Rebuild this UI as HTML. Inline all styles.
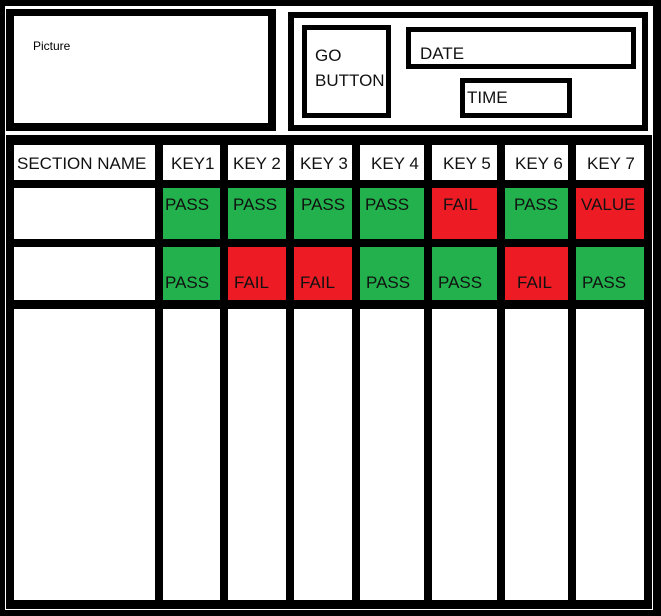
<!DOCTYPE html>
<html><head><style>
body{margin:0;width:661px;height:616px;background:#000;position:relative;overflow:hidden;font-family:"Liberation Sans",Arial,sans-serif}
div{position:absolute;box-sizing:border-box}
.w{background:#fff}
.b{border:5px solid #000;background:#fff}
.c{font-size:17px;color:#111;white-space:nowrap}
.g{background:#22b14c}
.r{background:#ed1c24}
</style></head><body>
<div style="left:5px;top:6px;width:648px;height:604px;border:1px solid #fff"></div>
<div class="w" style="left:6px;top:7px;width:646px;height:128px"></div>
<div class="b" style="left:6px;top:9px;width:270px;height:122px;border-width:7px 8px 8px 8px"></div>
<div style="left:33px;top:39px;font-size:12px">Picture</div>
<div class="b" style="left:288px;top:12px;width:360px;height:119px;border-width:6px"></div>
<div class="b" style="left:302px;top:25px;width:89px;height:93px"></div>
<div class="c" style="left:315px;top:43px;line-height:25px">GO<br>BUTTON</div>
<div class="b" style="left:406px;top:27px;width:230px;height:42px"></div>
<div class="c" style="left:420px;top:44px">DATE</div>
<div class="b" style="left:460px;top:78px;width:112px;height:40px"></div>
<div class="c" style="left:467px;top:88px">TIME</div>

<div class="w c" style="left:14px;top:145px;width:141px;height:35px;padding:9px 0 0 3px">SECTION NAME</div>
<div class="w c" style="left:163px;top:145px;width:57px;height:35px;padding:9px 0 0 8px">KEY1</div>
<div class="w c" style="left:228px;top:145px;width:58px;height:35px;padding:9px 0 0 5px">KEY 2</div>
<div class="w c" style="left:294px;top:145px;width:58px;height:35px;padding:9px 0 0 6px">KEY 3</div>
<div class="w c" style="left:360px;top:145px;width:64px;height:35px;padding:9px 0 0 11px">KEY 4</div>
<div class="w c" style="left:432px;top:145px;width:65px;height:35px;padding:9px 0 0 11px">KEY 5</div>
<div class="w c" style="left:505px;top:145px;width:63px;height:35px;padding:9px 0 0 10px">KEY 6</div>
<div class="w c" style="left:576px;top:145px;width:68px;height:35px;padding:9px 0 0 11px">KEY 7</div>

<div class="w" style="left:14px;top:188px;width:141px;height:51px"></div>
<div class="g c" style="left:163px;top:188px;width:57px;height:51px;padding:7px 0 0 2px">PASS</div>
<div class="g c" style="left:228px;top:188px;width:58px;height:51px;padding:7px 0 0 5px">PASS</div>
<div class="g c" style="left:294px;top:188px;width:58px;height:51px;padding:7px 0 0 7px">PASS</div>
<div class="g c" style="left:360px;top:188px;width:64px;height:51px;padding:7px 0 0 5px">PASS</div>
<div class="r c" style="left:432px;top:188px;width:65px;height:51px;padding:7px 0 0 11px">FAIL</div>
<div class="g c" style="left:505px;top:188px;width:63px;height:51px;padding:7px 0 0 9px">PASS</div>
<div class="r c" style="left:576px;top:188px;width:68px;height:51px;padding:7px 0 0 5px">VALUE</div>

<div class="w" style="left:14px;top:247px;width:141px;height:53px"></div>
<div class="g c" style="left:163px;top:247px;width:57px;height:53px;padding:26px 0 0 2px">PASS</div>
<div class="r c" style="left:228px;top:247px;width:58px;height:53px;padding:26px 0 0 6px">FAIL</div>
<div class="r c" style="left:294px;top:247px;width:58px;height:53px;padding:26px 0 0 6px">FAIL</div>
<div class="g c" style="left:360px;top:247px;width:64px;height:53px;padding:26px 0 0 6px">PASS</div>
<div class="g c" style="left:432px;top:247px;width:65px;height:53px;padding:26px 0 0 6px">PASS</div>
<div class="r c" style="left:505px;top:247px;width:63px;height:53px;padding:26px 0 0 12px">FAIL</div>
<div class="g c" style="left:576px;top:247px;width:68px;height:53px;padding:26px 0 0 6px">PASS</div>

<div class="w" style="left:14px;top:309px;width:141px;height:291px"></div>
<div class="w" style="left:163px;top:309px;width:57px;height:291px"></div>
<div class="w" style="left:228px;top:309px;width:58px;height:291px"></div>
<div class="w" style="left:294px;top:309px;width:58px;height:291px"></div>
<div class="w" style="left:360px;top:309px;width:64px;height:291px"></div>
<div class="w" style="left:432px;top:309px;width:65px;height:291px"></div>
<div class="w" style="left:505px;top:309px;width:63px;height:291px"></div>
<div class="w" style="left:576px;top:309px;width:68px;height:291px"></div>
</body></html>
